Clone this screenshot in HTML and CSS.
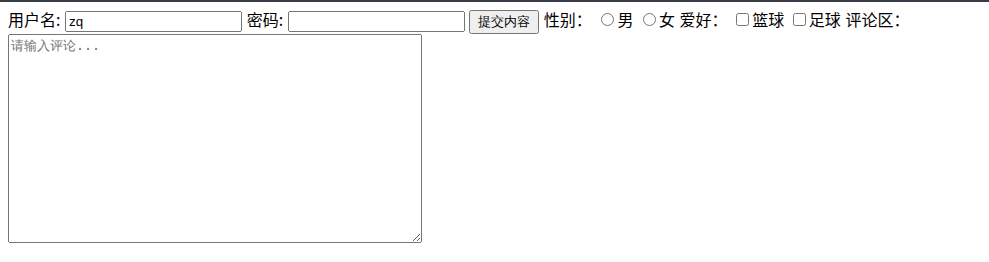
FILE: index.html
```html
<!DOCTYPE html>
<html lang="zh">
<head>
    <meta charset="UTF-8">
    <title>表单</title>
    <link rel="stylesheet" href="styles.css">
</head>
<body>
<form class="formular" action="#">
    <!-- 用户信息 -->
    用户名: <input type="text" name="username" value="zq">
    密码: <input type="password" name="pwd">
    <input type="submit" class="knopf" value="提交内容">
    性别： <input type="radio" name="sex">男
    <input type="radio" name="sex">女
    爱好： <input type="checkbox" name="hobby">篮球
    <input type="checkbox" name="hobby">足球
    评论区：<textarea class="kommentar" placeholder="请输入评论..."></textarea>
</form>
</body>
</html>
```

FILE: styles.css
```css
html {
    border-top: 2px solid #373d47; /* dunkle Leiste oben */
}

body {
    margin: 8px;
    font-family: "Noto Sans CJK SC", "Liberation Sans", sans-serif;
    font-size: 16px;
    line-height: 1.2;
    word-spacing: 1px;
    color: #000;
}

.formular input[type="text"],
.formular input[type="password"] {
    width: 169px;
}

.knopf {
    padding: 1px 7px;
}

.kommentar {
    width: 408px;
    height: 203px;
    vertical-align: bottom;
    word-spacing: 0;
}
```
